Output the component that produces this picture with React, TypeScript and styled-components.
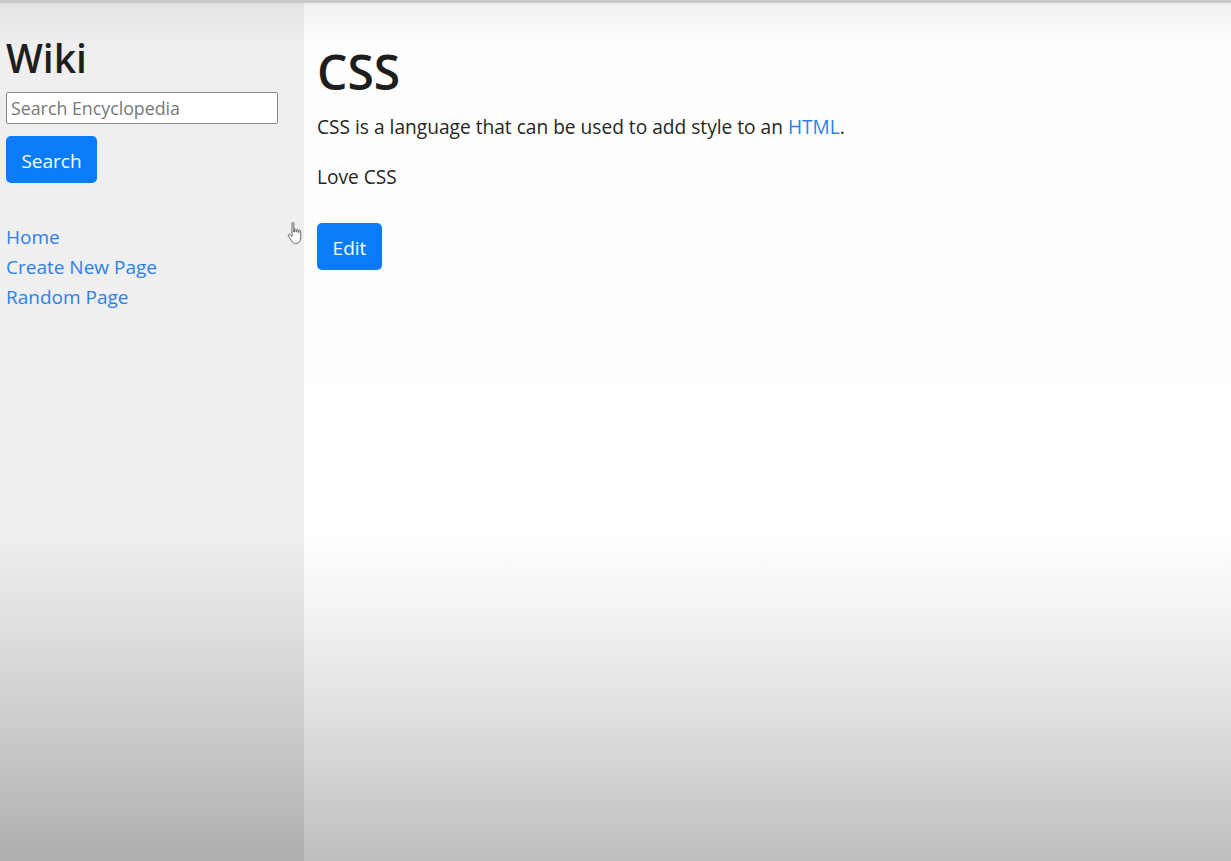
import React from "react";
import styled, { createGlobalStyle } from "styled-components";

const GlobalStyle = createGlobalStyle`
  html, body {
    margin: 0;
    padding: 0;
  }
  body {
    font-family: "Open Sans", "Noto Sans", "Liberation Sans", sans-serif;
    color: #212529;
    background: #ffffff;
  }
  * { box-sizing: border-box; }
`;

const Page = styled.div`
  position: relative;
  display: grid;
  grid-template-columns: 304px 1fr;
  height: 861px;
  border-top: 3px solid #c8c8c8;
  overflow: hidden;
`;

const Sidebar = styled.aside`
  display: flex;
  flex-direction: column;
  align-items: flex-start;
  padding: 32px 0 0 6px;
  background: linear-gradient(
    to bottom,
    #e3e3e3 0px,
    #efefef 45px,
    #efefef 530px,
    #dcdcdc 640px,
    #c4c4c4 760px,
    #adadad 861px
  );
`;

const SiteTitle = styled.h2`
  margin: 0 0 10px 0;
  font-size: 39px;
  font-weight: 600;
  line-height: 1.2;
  color: #1e1e1e;
`;

const SearchInput = styled.input`
  width: 272px;
  height: 32px;
  padding: 0 4px;
  border: 1px solid #8a8a8a;
  border-radius: 2px;
  background: #ffffff;
  font-family: inherit;
  font-size: 17.8px;
  color: #212529;
  &::placeholder {
    color: #777777;
  }
`;

const PrimaryButton = styled.button<{ $w: number }>`
  width: ${(p) => p.$w}px;
  height: 47px;
  border: none;
  border-radius: 5px;
  background: #0a7cf8;
  color: #ffffff;
  font-family: inherit;
  font-size: 19px;
  line-height: 1;
  padding: 4px 0 0 0;
  cursor: pointer;
`;

const SearchButton = styled(PrimaryButton)`
  margin-top: 12px;
`;

const NavList = styled.nav`
  display: flex;
  flex-direction: column;
  margin-top: 39px;
`;

const NavLink = styled.a`
  font-size: 19px;
  line-height: 30px;
  color: #2e80e4;
  text-decoration: none;
`;

const Main = styled.main`
  display: flex;
  flex-direction: column;
  align-items: flex-start;
  padding: 40px 13px 0 13px;
  background: linear-gradient(
    to bottom,
    #f0f0f0 0px,
    #fdfdfd 40px,
    #ffffff 530px,
    #f1f1f1 620px,
    #dedede 720px,
    #bdbdbd 861px
  );
`;

const PageTitle = styled.h1`
  margin: 0 0 11px 0;
  font-size: 48px;
  font-weight: 600;
  line-height: 1.2;
  color: #1e1e1e;
`;

const Paragraph = styled.p<{ $mb: number }>`
  margin: 0 0 ${(p) => p.$mb}px 0;
  font-size: 19.15px;
  line-height: 30px;
  color: #262626;
`;

const InlineLink = styled.a`
  color: #2e80e4;
  text-decoration: none;
`;

const EditButton = styled(PrimaryButton)``;

const Cursor = styled.svg`
  position: absolute;
  left: 286px;
  top: 218px;
  pointer-events: none;
`;

export default function App() {
  return (
    <>
      <GlobalStyle />
      <Page>
        <Sidebar>
          <SiteTitle>Wiki</SiteTitle>
          <form onSubmit={(e) => e.preventDefault()}>
            <SearchInput type="text" placeholder="Search Encyclopedia" />
          </form>
          <SearchButton $w={91}>Search</SearchButton>
          <NavList>
            <NavLink href="#">Home</NavLink>
            <NavLink href="#">Create New Page</NavLink>
            <NavLink href="#">Random Page</NavLink>
          </NavList>
        </Sidebar>
        <Main>
          <PageTitle>CSS</PageTitle>
          <Paragraph $mb={20}>
            CSS is a language that can be used to add style to an{" "}
            <InlineLink href="#">HTML</InlineLink>.
          </Paragraph>
          <Paragraph $mb={31}>Love CSS</Paragraph>
          <EditButton $w={65}>Edit</EditButton>
        </Main>
        <Cursor width="20" height="26" viewBox="0 0 20 26">
          <path
            d="M6 2.2c0-1 1.8-1 1.8 0V11h.6V8.6c0-1 1.7-1 1.7 0V11h.6V9.4c0-1 1.7-1 1.7 0V11.4h.6v-1.2c0-1 1.7-1 1.7 0V17c0 3-1.8 5.5-4.8 5.5H9.6c-1.8 0-3-1-4-2.6L2.3 14.6c-.6-1 .6-2 1.5-1.2L6 15.6Z"
            fill="#ffffff"
            stroke="#555555"
            strokeWidth="0.9"
            strokeLinejoin="round"
          />
        </Cursor>
      </Page>
    </>
  );
}
